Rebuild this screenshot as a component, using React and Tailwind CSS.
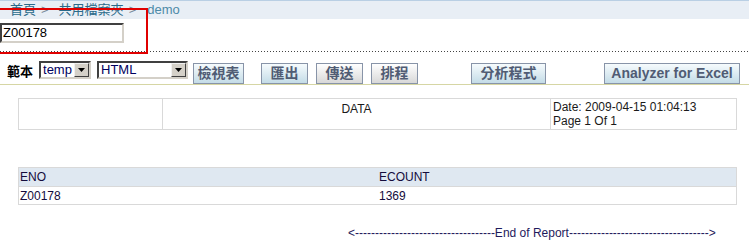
import React from "react";

const font = { fontFamily: '"Liberation Sans", Arial, "Noto Sans CJK TC", sans-serif' };

function Select({ value, width }) {
  return (
    <div className={`flex h-[18px] items-stretch border-2 border-t-[#404040] border-l-[#404040] border-b-[#d4d0c8] border-r-[#d4d0c8] bg-white ${width}`}>
      <div className="flex-1 pl-[2px] text-[13px] leading-[14px] text-[#000060]">{value}</div>
      <div className="flex w-[15px] items-center justify-center border border-t-[#f0f0f0] border-l-[#f0f0f0] border-b-[#404040] border-r-[#404040] bg-[#d4d0c8]">
        <svg width="7" height="4" viewBox="0 0 7 4"><path d="M0 0h7L3.5 4z" fill="#000" /></svg>
      </div>
    </div>
  );
}

function Btn({ children, gray, className }) {
  return (
    <div
      className={`flex h-[21px] items-center justify-center border border-[#8894a8] text-[14px] font-bold text-[#505c74] ${gray ? "bg-[linear-gradient(#ffffff,#d8d8d8)]" : "bg-[linear-gradient(#f6fbfd,#c4dce7)]"} ${className}`}
    >
      {children}
    </div>
  );
}

export default function App() {
  return (
    <div className="relative h-[247px] w-[749px] overflow-hidden bg-white" style={font}>
      {/* breadcrumb */}
      <div className="flex h-[19px] items-center border-t border-[#b9cfe4] bg-[#e8eef5] pl-[10px] text-[13px] text-[#2a6a8a]">
        <span>首頁</span>
        <span className="ml-[5px] text-[#7a8a9a]">&gt;</span>
        <span className="ml-[10px]">共用檔案夾</span>
        <span className="ml-[5px] text-[#7a8a9a]">&gt;</span>
        <span className="ml-[11px] text-[#4d8aa8]">demo</span>
      </div>

      {/* input */}
      <div className="pt-[4px]">
        <div className="flex h-[20px] w-[124px] items-center border-2 border-t-[#404040] border-l-[#404040] border-b-[#d4d0c8] border-r-[#d4d0c8] bg-white pl-[1px] text-[13px] text-black">
          Z00178
        </div>
      </div>

      {/* dotted line */}
      <div className="mt-[8px] h-[1px] w-full bg-[linear-gradient(to_right,#444_1px,transparent_1px)] bg-[length:3px_1px]" />

      {/* toolbar */}
      <div className="flex h-[32px] items-center pl-[7px] pt-[4px]">
        <span className="mt-[4px] text-[13px] font-bold text-black">範本</span>
        <div className="ml-[6px]">
          <Select value="temp" width="w-[52px]" />
        </div>
        <div className="ml-[6px]">
          <Select value="HTML" width="w-[91px]" />
        </div>
        <Btn className="ml-[5px] mt-[6px] w-[51px]">檢視表</Btn>
        <Btn className="ml-[17px] mt-[6px] w-[47px]">匯出</Btn>
        <Btn gray className="ml-[8px] mt-[6px] w-[47px]">傳送</Btn>
        <Btn gray className="ml-[8px] mt-[6px] w-[47px]">排程</Btn>
        <Btn className="ml-[53px] mt-[6px] w-[75px]">分析程式</Btn>
        <Btn className="ml-[58px] mt-[6px] w-[136px]">Analyzer for Excel</Btn>
      </div>

      {/* olive line */}
      <div className="h-[1px] w-full bg-[#d6d6a4]" />

      {/* report header table */}
      <div className="ml-[18px] mt-[13px] flex h-[32px] w-[719px] border border-[#d9d9d9] text-[12px] text-[#1a1a1a]">
        <div className="w-[144px] border-r border-[#d9d9d9]" />
        <div className="w-[388px] border-r border-[#d9d9d9] pt-[1px] text-center">DATA</div>
        <div className="flex-1 pl-[2px] pt-[1px] leading-[14px]">
          <div>Date: 2009-04-15 01:04:13</div>
          <div>Page 1 Of 1</div>
        </div>
      </div>

      {/* data table */}
      <div className="ml-[18px] mt-[37px] w-[719px] border border-[#d9d9d9] text-[12px] text-[#140c3c]">
        <div className="flex h-[18px] items-center bg-[#dfe8f1]">
          <div className="w-[358px] pl-[1px]">ENO</div>
          <div className="flex-1 pl-[2px]">ECOUNT</div>
        </div>
        <div className="flex h-[18px] items-center border-t border-[#d9d9d9]">
          <div className="w-[358px] pl-[1px]">Z00178</div>
          <div className="flex-1 pl-[2px]">1369</div>
        </div>
      </div>

      {/* end of report */}
      <div className="mt-[21px] pl-[348px] text-[12px] leading-[14px] text-[#1f1a5c] whitespace-nowrap">
        &lt;-----------------------------------End of Report-----------------------------------&gt;
      </div>

      {/* red highlight box */}
      <div className="absolute left-[-2px] top-[8px] h-[46px] w-[150px] border-2 border-[#e00000]" />
    </div>
  );
}
